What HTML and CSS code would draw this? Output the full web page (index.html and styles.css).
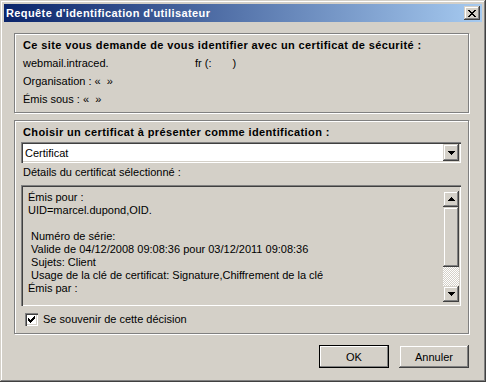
FILE: index.html
```html
<!DOCTYPE html>
<html lang="fr">
<head>
    <meta charset="UTF-8">
    <meta name="viewport" content="width=device-width, initial-scale=1.0">
    <title>Requête d'identification d'utilisateur</title>
    <link rel="stylesheet" href="styles.css">
</head>
<body>
    <div class="window">
        <div class="titlebar">
            <span class="title">Requête d'identification d'utilisateur</span>
            <span class="close raised">
                <svg width="8" height="7" viewBox="0 0 8 7" shape-rendering="crispEdges">
                    <path d="M0 0h2v1h-2z M6 0h2v1h-2z M1 1h2v1h-2z M5 1h2v1h-2z M2 2h4v1h-4z M3 3h2v1h-2z M2 4h4v1h-4z M1 5h2v1h-2z M5 5h2v1h-2z M0 6h2v1h-2z M6 6h2v1h-2z" fill="#000"/>
                </svg>
            </span>
        </div>

        <div class="content">
            <div class="group group-site">
                <div class="group-title">Ce site vous demande de vous identifier avec un certificat de sécurité :</div>
                <div class="line"><span class="host">webmail.intraced.</span><span>fr (:</span><span class="port-gap"></span><span>)</span></div>
                <div class="line">Organisation : «&nbsp;&nbsp;»</div>
                <div class="line">Émis sous : «&nbsp;&nbsp;»</div>
            </div>

            <div class="group group-cert">
                <div class="group-title">Choisir un certificat à présenter comme identification :</div>
                <div class="combo sunken">
                    <span class="combo-text">Certificat</span>
                    <span class="combo-btn raised">
                        <svg width="7" height="4" viewBox="0 0 7 4" shape-rendering="crispEdges">
                            <path d="M0 0h7v1h-7z M1 1h5v1h-5z M2 2h3v1h-3z M3 3h1v1h-1z" fill="#000"/>
                        </svg>
                    </span>
                </div>
                <div class="line">Détails du certificat sélectionné :</div>
                <div class="details sunken">
                    <div class="details-text">Émis pour :
UID=marcel.dupond,OID.

 Numéro de série:
 Valide de 04/12/2008 09:08:36 pour 03/12/2011 09:08:36
 Sujets: Client
 Usage de la clé de certificat: Signature,Chiffrement de la clé
Émis par :</div>
                    <div class="scrollbar">
                        <span class="scroll-btn raised">
                            <svg width="7" height="4" viewBox="0 0 7 4" shape-rendering="crispEdges">
                                <path d="M3 0h1v1h-1z M2 1h3v1h-3z M1 2h5v1h-5z M0 3h7v1h-7z" fill="#000"/>
                            </svg>
                        </span>
                        <span class="scroll-thumb raised"></span>
                        <span class="scroll-track"></span>
                        <span class="scroll-btn raised">
                            <svg width="7" height="4" viewBox="0 0 7 4" shape-rendering="crispEdges">
                                <path d="M0 0h7v1h-7z M1 1h5v1h-5z M2 2h3v1h-3z M3 3h1v1h-1z" fill="#000"/>
                            </svg>
                        </span>
                    </div>
                </div>
                <label class="check">
                    <span class="check-box">
                        <svg width="7" height="7" viewBox="0 0 7 7" shape-rendering="crispEdges">
                            <path d="M6 0h1v1h-1z M5 1h2v1h-2z M0 2h1v1h-1z M4 2h3v1h-3z M0 3h2v1h-2z M3 3h3v1h-3z M0 4h5v1h-5z M1 5h3v1h-3z M2 6h1v1h-1z" fill="#000"/>
                        </svg>
                    </span>
                    Se souvenir de cette décision
                </label>
            </div>

            <div class="actions">
                <button class="btn btn-default">OK</button>
                <button class="btn raised">Annuler</button>
            </div>
        </div>
    </div>
</body>
</html>
```

FILE: styles.css
```css
body {
    margin: 0;
    font-family: "Liberation Sans", Arial, sans-serif;
    font-size: 11px;
    color: #000;
    background-color: #d4d0c8;
}
.window {
    width: 486px;
    height: 382px;
    box-sizing: border-box;
    padding: 4px;
    background-color: #d4d0c8;
    box-shadow: inset -1px -1px #404040, inset 1px 1px #d4d0c8, inset -2px -2px #808080, inset 2px 2px #fff;
}
.titlebar {
    height: 18px;
    display: flex;
    align-items: center;
    justify-content: space-between;
    padding: 0 2px 0 2px;
    background: linear-gradient(to right, #0a246a, #a6caf0);
}
.title {
    color: #fff;
    font-weight: bold;
    letter-spacing: 0.4px;
}

/* 3D borders, classic style */
.raised {
    background-color: #d4d0c8;
    box-shadow: inset -1px -1px #404040, inset 1px 1px #d4d0c8, inset -2px -2px #808080, inset 2px 2px #fff;
}
.sunken {
    box-shadow: inset 1px 1px #808080, inset 2px 2px #404040, inset -1px -1px #fff, inset -2px -2px #d4d0c8;
}

.close {
    width: 16px;
    height: 14px;
    display: flex;
    align-items: center;
    justify-content: center;
}
.content {
    padding: 0 13px 0 10px;
}
.group {
    border: 1px solid #808080;
    box-shadow: inset 1px 1px #fff, 1px 1px #fff;
}
.group-site {
    margin-top: 11px;
    padding: 2px 8px 4px 8px;
}
.group-cert {
    margin-top: 7px;
    padding: 2px 7px 7px 6px;
}
.group-title {
    font-weight: bold;
    line-height: 18px;
    letter-spacing: 0.38px;
}
.group-cert .group-title,
.group-cert > .line {
    padding-left: 2px;
}
.line {
    line-height: 18px;
    display: flex;
}
.host {
    width: 172px;
}
.port-gap {
    width: 21px;
}
.combo {
    margin-top: 1px;
    height: 21px;
    background-color: #fff;
    display: flex;
    align-items: center;
    justify-content: space-between;
    padding: 2px;
    box-sizing: border-box;
}
.combo-text {
    padding-left: 2px;
}
.combo-btn {
    width: 16px;
    height: 17px;
    display: flex;
    align-items: center;
    justify-content: center;
}
.details {
    margin-top: 4px;
    height: 121px;
    box-sizing: border-box;
    padding: 6px 2px 4px 7px;
    display: flex;
    justify-content: space-between;
    background-color: #d4d0c8;
}
.details-text {
    white-space: pre;
    line-height: 13px;
    overflow: hidden;
}
.scrollbar {
    width: 16px;
    display: flex;
    flex-direction: column;
}
.scroll-btn {
    height: 16px;
    display: flex;
    align-items: center;
    justify-content: center;
}
.scroll-thumb {
    height: 60px;
}
.scroll-track {
    height: 19px;
    background: repeating-conic-gradient(#d4d0c8 0 25%, #fff 0 50%) 0 0 / 2px 2px;
}
.check {
    margin-top: 7px;
    display: flex;
    align-items: center;
    gap: 5px;
    padding-left: 4px;
    line-height: 13px;
}
.check-box {
    width: 13px;
    height: 13px;
    background-color: #fff;
    display: flex;
    align-items: center;
    justify-content: center;
    box-shadow: inset 1px 1px #808080, inset 2px 2px #404040, inset -1px -1px #fff, inset -2px -2px #d4d0c8;
}
.actions {
    margin-top: 11px;
    display: flex;
    justify-content: flex-end;
    gap: 10px;
}
.btn {
    width: 70px;
    height: 23px;
    border: none;
    padding: 0;
    font-family: "Liberation Sans", Arial, sans-serif;
    font-size: 11px;
    color: #000;
    background-color: #d4d0c8;
}
.btn-default {
    box-shadow: inset 0 0 0 1px #000, inset -2px -2px #808080, inset 2px 2px #fff;
}
```
